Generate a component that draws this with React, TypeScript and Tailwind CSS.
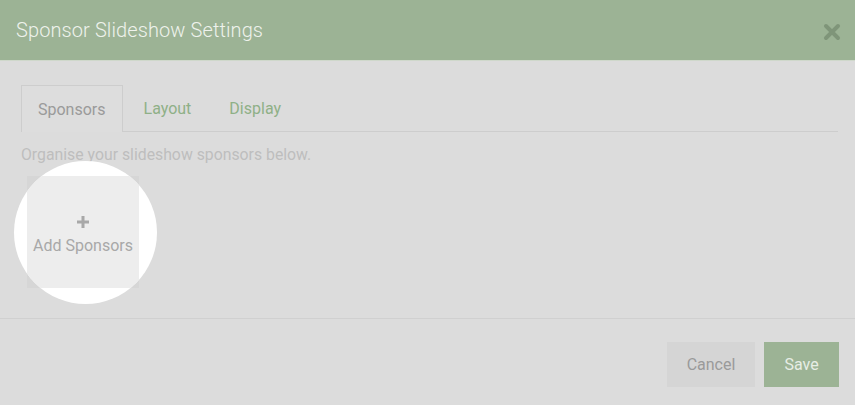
export default function App() {
  const font = { fontFamily: "Roboto, 'Liberation Sans', sans-serif" };
  return (
    <div
      className="w-[855px] h-[405px] bg-[#dcdcdc] flex flex-col overflow-hidden"
      style={font}
    >
      <header className="h-[61px] bg-[#9cb395] flex items-center justify-between pl-4 pr-[14px] border-b border-[#cfd8cb]">
        <h1 className="text-[20px] font-light text-[#eef2ec] tracking-[0.1px]">
          Sponsor Slideshow Settings
        </h1>
        <svg width="18" height="18" viewBox="0 0 18 18" className="mt-[3px]">
          <path
            d="M3 3 L15 15 M15 3 L3 15"
            stroke="#7f9579"
            strokeWidth="4"
            strokeLinecap="round"
          />
        </svg>
      </header>

      <main className="flex-1 px-[21px] pt-[24px]">
        <nav className="flex gap-[4px] border-b border-[#cdcdcd] w-[817px] text-[16px]">
          <div className="h-[47px] px-[16px] pt-[2px] flex items-center border border-b-0 border-[#cdcdcd] bg-[#dddddd] text-[#9a9a9a] -mb-px">
            Sponsors
          </div>
          <div className="h-[46px] px-[17px] pt-[2px] flex items-center text-[#8fb087]">
            Layout
          </div>
          <div className="h-[46px] px-[17px] pt-[2px] flex items-center text-[#8fb087]">
            Display
          </div>
        </nav>

        <p className="mt-[14px] text-[15.8px] text-[#bebebe] leading-[18px]">
          Organise your slideshow sponsors below.
        </p>

        <div className="relative ml-[6px] mt-[12px] w-[112px] h-[112px] bg-[#d6d6d6]">
          <div className="absolute left-[-13px] top-[-15.5px] w-[143px] h-[143px] rounded-full bg-white overflow-hidden">
            <div className="absolute left-[13px] top-[15.5px] w-[112px] h-[112px] bg-[#ededed]" />
          </div>
          <div className="absolute inset-0 flex flex-col items-center justify-center text-[#a8a8a8]">
            <svg width="12" height="12" viewBox="0 0 12 12" className="mt-[10px]">
              <path d="M6 0 V12 M0 6 H12" stroke="#a8a8a8" strokeWidth="3" />
            </svg>
            <span className="text-[16px] mt-[6px]">Add Sponsors</span>
          </div>
        </div>
      </main>

      <footer className="h-[87px] border-t border-[#d0d0d0] flex items-start justify-end gap-[9px] pr-[16px] pt-[23px]">
        <button className="w-[88px] h-[45px] bg-[#d5d5d5] text-[#9a9a9a] text-[16px]">
          Cancel
        </button>
        <button className="w-[75px] h-[45px] bg-[#9cb395] text-[#e7ede5] text-[16px]">
          Save
        </button>
      </footer>
    </div>
  );
}
